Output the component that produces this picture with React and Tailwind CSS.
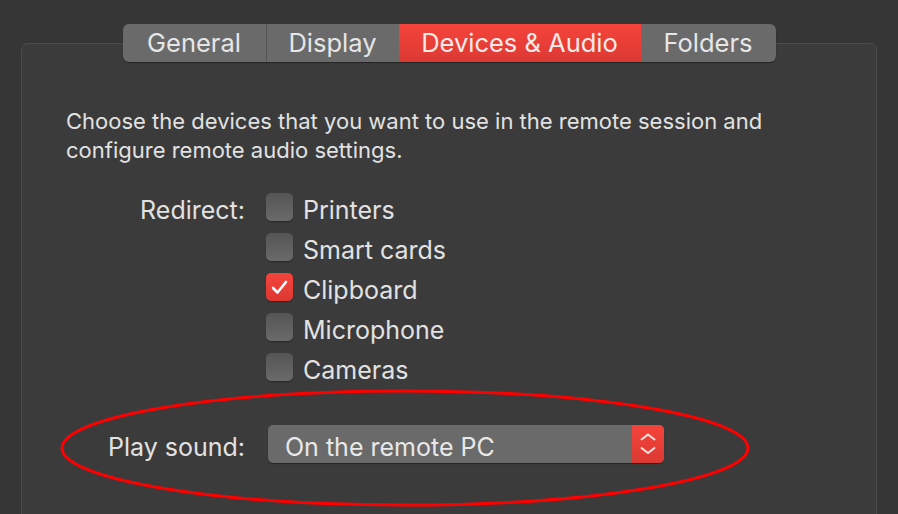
import React from 'react';

const tabs = [
  { label: 'General', w: 'w-[143px]' },
  { label: 'Display', w: 'w-[133px]' },
  { label: 'Devices & Audio', w: 'w-[242px]', active: true },
  { label: 'Folders', w: 'w-[135px]' },
];

const devices = [
  { label: 'Printers' },
  { label: 'Smart cards' },
  { label: 'Clipboard', checked: true },
  { label: 'Microphone' },
  { label: 'Cameras' },
];

function Checkbox({ checked }) {
  if (checked) {
    return (
      <span className="shrink-0 w-[27px] h-[28px] rounded-[5px] bg-gradient-to-b from-[#f5443c] to-[#dc3931] flex items-center justify-center shadow-[0_1px_1px_rgba(0,0,0,0.35)]">
        <svg width="17" height="15" viewBox="0 0 17 15" fill="none">
          <path d="M2 8 L6.5 12.5 L15 2" stroke="#fff" strokeWidth="2.6" strokeLinecap="round" strokeLinejoin="round" />
        </svg>
      </span>
    );
  }
  return (
    <span className="shrink-0 w-[27px] h-[28px] rounded-[5px] bg-gradient-to-b from-[#555555] to-[#6a6a6a] shadow-[0_1px_1px_rgba(0,0,0,0.35)]" />
  );
}

export default function App() {
  return (
    <div
      className="relative w-[898px] h-[514px] overflow-hidden bg-[#363636] text-[#e2e2e2] pt-[24px] px-[21px]"
      style={{ fontFamily: 'Inter, "Open Sans", sans-serif' }}
    >
      {/* Tabs */}
      <div className="relative z-10 flex justify-center">
        <div className="flex h-[38px] rounded-[6px] overflow-hidden bg-[#6a6a6a] shadow-[0_1px_1px_rgba(0,0,0,0.4)]">
          {tabs.map((t, i) => (
            <div
              key={t.label}
              className={`${t.w} flex items-center justify-center pt-[1px] text-[25.5px] ${
                t.active
                  ? 'bg-gradient-to-b from-[#f5433b] to-[#db3a33] text-[#fbe9e8]'
                  : 'text-[#e6e6e6]'
              } ${i > 0 && !t.active && !tabs[i - 1].active ? 'border-l border-[#555555]' : ''}`}
            >
              {t.label}
            </div>
          ))}
        </div>
      </div>

      {/* Panel */}
      <div className="-mt-[19px] h-[520px] rounded-[7px] border border-[#4b4b4b] bg-[#3b3b3b] pt-[63px] pl-[44px]">
        <p className="text-[22px] leading-[29px] w-[760px]">
          Choose the devices that you want to use in the remote session and configure remote audio settings.
        </p>

        <div className="mt-[28px] grid grid-cols-[179px_1fr] gap-x-[21px]">
          <div className="text-right text-[25px] leading-[28px] pt-[3px] whitespace-nowrap">Redirect:</div>
          <div className="flex flex-col gap-[12px]">
            {devices.map((d) => (
              <div key={d.label} className="flex items-start gap-[10px] h-[28px] text-[25px]">
                <Checkbox checked={d.checked} />
                <span className="leading-[28px] pt-[3px]">{d.label}</span>
              </div>
            ))}
          </div>
        </div>

        <div className="mt-[44px] flex items-start">
          <div className="w-[179px] text-right text-[25px] leading-[38px] pt-[3px] whitespace-nowrap">Play sound:</div>
          <div className="ml-[23px] w-[396px] h-[38px] flex rounded-[5px] overflow-hidden bg-[#6a6a6a] shadow-[0_1px_1px_rgba(0,0,0,0.4)]">
            <div className="flex-1 pl-[17px] pt-[3px] text-[25px] leading-[38px] text-[#e8e8e8]">On the remote PC</div>
            <div className="w-[32px] bg-gradient-to-b from-[#f5433b] to-[#db3a33] flex items-center justify-center">
              <svg width="16" height="22" viewBox="0 0 16 22" fill="none">
                <path d="M1.5 6.5 L8 1.5 L14.5 6.5" stroke="#fde3e1" strokeWidth="2" strokeLinecap="round" strokeLinejoin="round" />
                <path d="M1.5 15 L8 20 L14.5 15" stroke="#fde3e1" strokeWidth="2" strokeLinecap="round" strokeLinejoin="round" />
              </svg>
            </div>
          </div>
        </div>
      </div>

      {/* Red annotation ellipse */}
      <svg className="absolute left-0 top-0 pointer-events-none" width="898" height="514">
        <ellipse cx="405" cy="448" rx="343" ry="57" fill="none" stroke="#ff0000" strokeWidth="3" />
      </svg>
    </div>
  );
}
